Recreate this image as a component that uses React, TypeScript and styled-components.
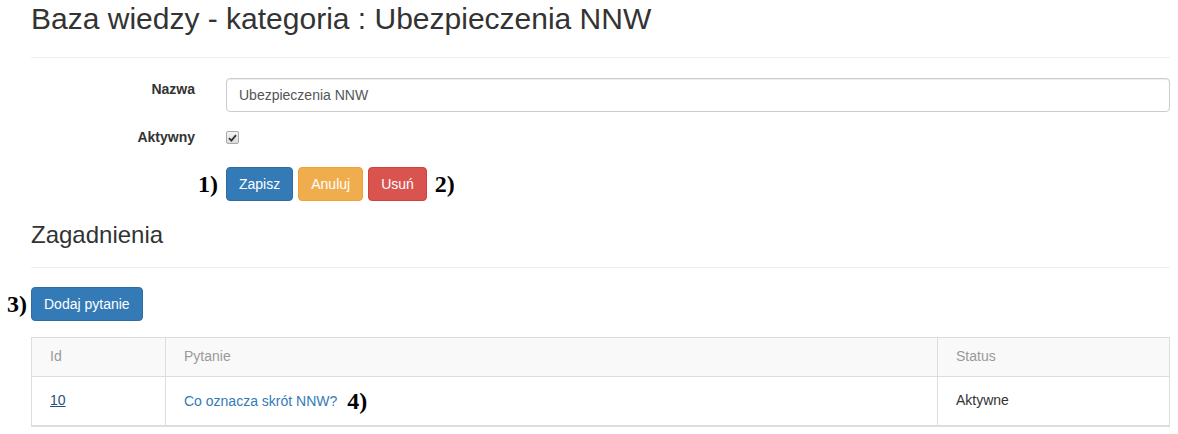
import React from "react";
import styled, { createGlobalStyle, css } from "styled-components";

const GlobalStyle = createGlobalStyle`
  html, body { margin: 0; padding: 0; background: #fff; }
  body {
    font-family: "Liberation Sans", Arial, sans-serif;
    font-size: 14px;
    line-height: 1.42857;
    color: #333;
  }
  * { box-sizing: border-box; }
`;

const Page = styled.div`
  padding: 0 8px 0 31px;
  position: relative;
`;

const Title = styled.h1`
  margin: 0;
  padding-top: 2px;
  font-size: 30px;
  font-weight: 400;
  line-height: 33px;
  color: #333;
`;

const Divider = styled.hr<{ $top: number; $bottom: number }>`
  margin: ${(p) => p.$top}px 0 ${(p) => p.$bottom}px;
  border: 0;
  border-top: 1px solid #eee;
  height: 0;
`;

const FormGrid = styled.div`
  display: grid;
  grid-template-columns: 164px 1fr;
  column-gap: 31px;
  row-gap: 0;
  align-items: start;
`;

const Label = styled.label<{ $pt: number }>`
  text-align: right;
  font-weight: 700;
  font-size: 14px;
  padding-top: ${(p) => p.$pt}px;
  color: #333;
`;

const TextInput = styled.input`
  display: block;
  width: 100%;
  height: 34px;
  padding: 6px 12px;
  font-family: inherit;
  font-size: 14px;
  color: #555;
  background: #fff;
  border: 1px solid #ccc;
  border-radius: 4px;
  box-shadow: inset 0 1px 1px rgba(0, 0, 0, 0.075);
  outline: none;
`;

const CheckCell = styled.div`
  padding-top: 19px;
  height: 55px;
`;

const CheckBox = styled.span`
  display: inline-flex;
  align-items: center;
  justify-content: center;
  width: 13px;
  height: 13px;
  border: 1px solid #a9a9a9;
  border-radius: 2px;
  background: linear-gradient(#f4f4f4, #dcdcdc);
  vertical-align: top;
`;

const ButtonRow = styled.div`
  display: flex;
  align-items: center;
  gap: 5px;
  position: relative;
`;

const Marker = styled.span`
  font-family: "Liberation Serif", "Times New Roman", serif;
  font-weight: 700;
  font-size: 24px;
  line-height: 1;
  color: #000;
`;

const LeftMarker = styled(Marker)<{ $gap: number }>`
  position: absolute;
  right: calc(100% + ${(p) => p.$gap}px);
  top: 50%;
  transform: translateY(-50%);
`;

const RightMarker = styled(Marker)`
  margin-left: 3px;
`;

const variants = {
  primary: css`background: #337ab7; border-color: #2e6da4;`,
  warning: css`background: #f0ad4e; border-color: #eea236;`,
  danger: css`background: #d9534f; border-color: #d43f3a;`,
};

const Button = styled.button<{ $variant: keyof typeof variants }>`
  display: inline-block;
  height: 34px;
  padding: 6px 12px;
  font-family: inherit;
  font-size: 14px;
  line-height: 20px;
  color: #fff;
  border: 1px solid transparent;
  border-radius: 4px;
  cursor: pointer;
  ${(p) => variants[p.$variant]}
`;

const SectionTitle = styled.h3`
  margin: 0;
  padding-top: 21px;
  font-size: 24px;
  font-weight: 400;
  line-height: 26px;
  color: #333;
`;

const AddRow = styled.div`
  position: relative;
  display: flex;
`;

const Table = styled.table`
  width: 100%;
  margin-top: 16px;
  border-collapse: collapse;
  border: 1px solid #ddd;
  border-bottom: 2px solid #ddd;
`;

const Th = styled.th<{ $w?: number }>`
  width: ${(p) => (p.$w ? `${p.$w}px` : "auto")};
  height: 39px;
  padding: 0 18px;
  text-align: left;
  font-weight: 400;
  font-size: 14px;
  color: #999;
  background: #f9f9f9;
  border: 1px solid #ddd;
`;

const Td = styled.td`
  height: 49px;
  padding: 0 18px;
  font-size: 14px;
  color: #333;
  border: 1px solid #ddd;
  border-bottom: 0;
`;

const IdLink = styled.a`
  color: #23527c;
  text-decoration: underline;
`;

const QLink = styled.a`
  color: #337ab7;
  text-decoration: none;
`;

const InlineMarker = styled(Marker)`
  margin-left: 10px;
  vertical-align: -3px;
`;

export default function App() {
  return (
    <>
      <GlobalStyle />
      <Page>
        <Title>Baza wiedzy - kategoria : Ubezpieczenia NNW</Title>
        <Divider $top={22} $bottom={20} />
        <FormGrid>
          <Label $pt={2}>Nazwa</Label>
          <TextInput defaultValue="Ubezpieczenia NNW" readOnly />
          <Label $pt={16}>Aktywny</Label>
          <CheckCell>
            <CheckBox>
              <svg width="9" height="8" viewBox="0 0 9 8">
                <path d="M1 4.2 L3.4 6.6 L8 1.2" fill="none" stroke="#333" strokeWidth="1.8" />
              </svg>
            </CheckBox>
          </CheckCell>
          <div />
          <ButtonRow>
            <LeftMarker $gap={8}>1)</LeftMarker>
            <Button $variant="primary">Zapisz</Button>
            <Button $variant="warning">Anuluj</Button>
            <Button $variant="danger">Usuń</Button>
            <RightMarker>2)</RightMarker>
          </ButtonRow>
        </FormGrid>
        <SectionTitle>Zagadnienia</SectionTitle>
        <Divider $top={19} $bottom={19} />
        <AddRow>
          <LeftMarker $gap={4}>3)</LeftMarker>
          <Button $variant="primary">Dodaj pytanie</Button>
        </AddRow>
        <Table>
          <thead>
            <tr>
              <Th $w={134}>Id</Th>
              <Th>Pytanie</Th>
              <Th $w={232}>Status</Th>
            </tr>
          </thead>
          <tbody>
            <tr>
              <Td>
                <IdLink href="#">10</IdLink>
              </Td>
              <Td>
                <QLink href="#">Co oznacza skrót NNW?</QLink>
                <InlineMarker>4)</InlineMarker>
              </Td>
              <Td>Aktywne</Td>
            </tr>
          </tbody>
        </Table>
      </Page>
    </>
  );
}
